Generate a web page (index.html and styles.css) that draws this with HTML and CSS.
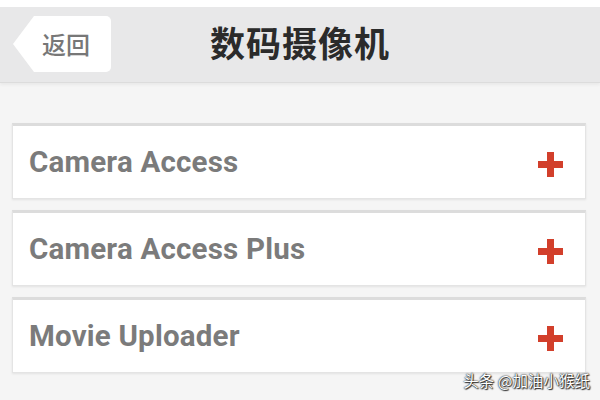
FILE: index.html
```html
<!DOCTYPE html>
<html lang="zh-CN">
<head>
  <meta charset="UTF-8">
  <title>数码摄像机</title>
  <link rel="stylesheet" href="styles.css">
</head>
<body>
  <div class="page">
    <div class="header">
      <div class="back-btn">
        <span class="back-arrow"></span>
        <span class="back-label">返回</span>
      </div>
      <h1 class="title">数码摄像机</h1>
    </div>

    <!-- app list -->
    <div class="list">
      <div class="item">
        <span class="item-name">Camera Access</span>
        <span class="plus"></span>
      </div>
      <div class="item">
        <span class="item-name">Camera Access Plus</span>
        <span class="plus"></span>
      </div>
      <div class="item">
        <span class="item-name">Movie Uploader</span>
        <span class="plus"></span>
      </div>
    </div>

    <div class="watermark">头条 @加油小猴纸</div>
  </div>
</body>
</html>
```

FILE: styles.css
```css
* { box-sizing: border-box; }

html, body {
  margin: 0;
  padding: 0;
}

body {
  font-family: Roboto, "Noto Sans CJK SC", sans-serif;
  background: #f5f5f5;
  width: 600px;
  height: 400px;
  overflow: hidden;
}

.page {
  position: relative;
  height: 400px;
  padding-top: 7px;
  background: linear-gradient(#fff 0 7px, #f5f5f5 7px);
}

.header {
  position: relative;
  height: 76px;
  background: #e8e8e9;
  border-bottom: 1px solid #dcdcdc;
  box-shadow: 0 2px 3px rgba(0,0,0,0.05);
  display: flex;
  align-items: center;
  padding-left: 13px;
}

.back-btn {
  display: flex;
  align-items: center;
  height: 56px;
  margin-top: -2px;
}

.back-arrow {
  width: 0;
  height: 0;
  border-top: 28px solid transparent;
  border-bottom: 28px solid transparent;
  border-right: 21px solid #fff;
}

.back-label {
  display: flex;
  align-items: center;
  height: 56px;
  padding: 0 21px 0 8px;
  background: #fff;
  border-radius: 0 5px 5px 0;
  color: #777;
  font-family: "Noto Sans CJK SC", sans-serif;
  font-size: 24px;
  font-weight: 500;
}

.title {
  position: absolute;
  left: 0;
  right: 0;
  top: 0;
  margin: 0;
  line-height: 70px;
  text-align: center;
  font-family: "Noto Sans CJK SC", sans-serif;
  font-size: 35px;
  font-weight: 700;
  letter-spacing: 1px;
  color: #2b2b2b;
  pointer-events: none;
}

.list {
  display: flex;
  flex-direction: column;
  gap: 11px;
  padding: 40px 14px 0 12px;
}

.item {
  height: 76px;
  background: #fff;
  border: 1px solid #e4e4e4;
  border-top: 3px solid #dcdcdc;
  box-shadow: 0 1px 2px rgba(0,0,0,0.08);
  display: flex;
  align-items: center;
  justify-content: space-between;
  padding: 0 22px 0 16px;
}

.item-name {
  font-size: 29.5px;
  font-weight: 700;
  letter-spacing: 0.2px;
  color: #7b7b7b;
  margin-top: -1px;
}

.plus {
  position: relative;
  width: 25px;
  height: 25px;
  margin-top: 4px;
}

.plus::before,
.plus::after {
  content: "";
  position: absolute;
  background: #d23f2b;
}

.plus::before {
  left: 0;
  right: 0;
  top: 9px;
  height: 7px;
}

.plus::after {
  top: 0;
  bottom: 0;
  left: 9px;
  width: 7px;
}

.watermark {
  position: absolute;
  right: 10px;
  bottom: 9px;
  font-family: "Noto Sans CJK SC", sans-serif;
  font-size: 15.5px;
  color: #fff;
  text-shadow: 0 0 2px #222, 0 0 1px #222, 1px 1px 1px #333;
}
```
